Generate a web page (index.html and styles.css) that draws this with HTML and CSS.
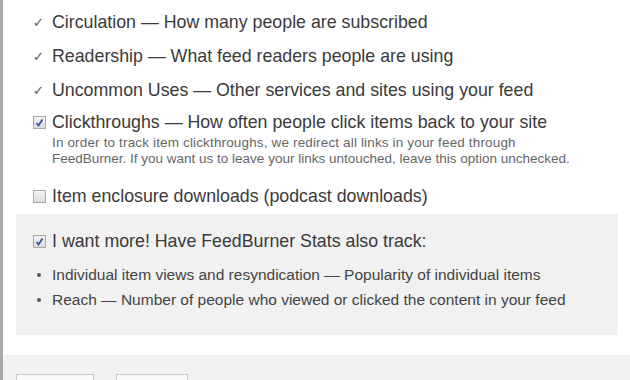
FILE: index.html
```html
<!DOCTYPE html>
<html>
<head>
<meta charset="utf-8">
<link rel="stylesheet" href="styles.css">
</head>
<body>
<div class="page">
  <div class="options">
    <div class="row"><span class="tick">✓</span><span>Circulation — How many people are subscribed</span></div>
    <div class="row"><span class="tick">✓</span><span>Readership — What feed readers people are using</span></div>
    <div class="row row-last"><span class="tick">✓</span><span>Uncommon Uses — Other services and sites using your feed</span></div>
    <div class="row row-check"><span class="cb checked"><svg viewBox="0 0 13 13" width="13" height="13"><path d="M3.5 7 L5.5 9.5 L9.5 3.5" fill="none" stroke="#2f56a8" stroke-width="1.8"/></svg></span><span>Clickthroughs — How often people click items back to your site</span></div>
    <div class="note"><span class="note-l1">In order to track item clickthroughs, we redirect all links in your feed through</span><br><span class="note-l2">FeedBurner. If you want us to leave your links untouched, leave this option unchecked.</span></div>
    <div class="row row-check"><span class="cb"></span><span>Item enclosure downloads (podcast downloads)</span></div>
  </div>
  <div class="more">
    <div class="row row-check"><span class="cb checked"><svg viewBox="0 0 13 13" width="13" height="13"><path d="M3.5 7 L5.5 9.5 L9.5 3.5" fill="none" stroke="#2f56a8" stroke-width="1.8"/></svg></span><span>I want more! Have FeedBurner Stats also track:</span></div>
    <ul class="bullets">
      <li>Individual item views and resyndication — Popularity of individual items</li>
      <li>Reach — Number of people who viewed or clicked the content in your feed</li>
    </ul>
  </div>
  <div class="footer">
    <span class="btn btn1"></span>
    <span class="btn btn2"></span>
  </div>
</div>
</body>
</html>
```
FILE: styles.css
```css
html, body {
  margin: 0;
  padding: 0;
  background: #fff;
}
.page {
  border-left: 3px solid #a8a8a8;
  height: 380px;
  overflow: hidden;
  font-family: "Liberation Sans", Arial, sans-serif;
  color: #3a3a3a;
  box-sizing: border-box;
}
.options {
  padding: 12px 0 0 30px;
}
.row {
  display: flex;
  align-items: center;
  height: 20px;
  font-size: 17.8px;
  margin-bottom: 14px;
  white-space: nowrap;
}
.row-last {
  margin-bottom: 12px;
}
.tick {
  width: 19px;
  font-size: 13px;
  color: #555;
}
.cb {
  width: 11px;
  height: 11px;
  border: 1px solid #a9a9a9;
  background: linear-gradient(#f4f4f4, #dcdcdc);
  margin-right: 6px;
  position: relative;
  flex: none;
}
.cb svg {
  position: absolute;
  left: -1px;
  top: -1px;
}
.row-check {
  margin-bottom: 0;
}
.note {
  font-size: 13.5px;
  line-height: 16px;
  color: #666;
  padding: 3px 0 0 19px;
  margin-bottom: 19px;
  white-space: nowrap;
}
.note-l1 {
  letter-spacing: 0.15px;
}
.more {
  margin: 8px 12px 0 13px;
  background: #f1f1f1;
  height: 121px;
  box-sizing: border-box;
  padding: 17px 0 0 17px;
}
.bullets {
  list-style: none;
  margin: 11px 0 0 0;
  padding: 0;
  font-size: 15.5px;
  line-height: 25px;
  color: #444;
  white-space: nowrap;
}
.bullets li {
  padding-left: 19px;
  position: relative;
}
.bullets li::before {
  content: "";
  position: absolute;
  left: 4px;
  top: 11px;
  width: 4px;
  height: 4px;
  border-radius: 50%;
  background: #555;
}
.footer {
  margin-top: 20px;
  background: #f1f1f1;
  height: 30px;
  padding: 19px 0 0 13px;
  display: flex;
  gap: 22px;
}
.btn {
  display: block;
  height: 20px;
  border: 1px solid #c8c8c8;
  border-bottom: none;
  background: #fafafa;
}
.btn1 { width: 76px; }
.btn2 { width: 70px; }
```
